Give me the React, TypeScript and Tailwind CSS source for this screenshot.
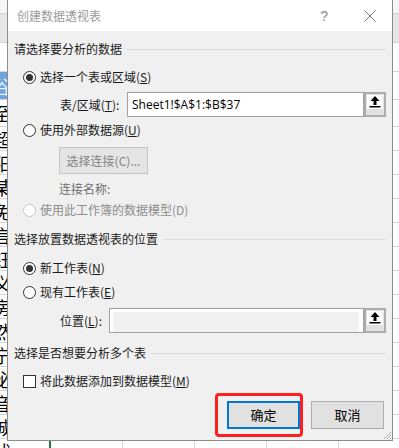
import React from 'react';

// spreadsheet rows behind the dialog
const sheetRows = [
  { h: 'h-[14px]', bg: 'bg-[#f6f6f6]', ch: '' },
  { h: 'h-[29px]', bg: 'bg-[#e6e6e6]', ch: '' },
  { h: 'h-[29px]', bg: 'bg-white', ch: '' },
  { h: 'h-[28px]', bg: 'bg-[#6fa3dc]', ch: '谷', sel: true },
  { h: 'h-[27px]', bg: 'bg-white', ch: '至' },
  { h: 'h-[24px]', bg: 'bg-white', ch: '超' },
  { h: 'h-[24px]', bg: 'bg-white', ch: '阳' },
  { h: 'h-[24px]', bg: 'bg-white', ch: '某' },
  { h: 'h-[24px]', bg: 'bg-white', ch: '免' },
  { h: 'h-[24px]', bg: 'bg-white', ch: '言' },
  { h: 'h-[24px]', bg: 'bg-white', ch: '钰' },
  { h: 'h-[24px]', bg: 'bg-white', ch: '义' },
  { h: 'h-[24px]', bg: 'bg-white', ch: '房' },
  { h: 'h-[24px]', bg: 'bg-white', ch: '然' },
  { h: 'h-[24px]', bg: 'bg-white', ch: '宁' },
  { h: 'h-[24px]', bg: 'bg-white', ch: '泌' },
  { h: 'h-[24px]', bg: 'bg-white', ch: '音' },
  { h: 'h-[24px]', bg: 'bg-white', ch: '城' },
  { h: 'h-[24px]', bg: 'bg-white', ch: '状', last: true },
];

const Sheet = () => (
  <div className="flex flex-col">
    {sheetRows.map((r, i) => (
      <div key={i} className={`flex shrink-0 border-b border-[#d4d4d4] ${r.h}`}>
        <div
          className={`w-[51px] shrink-0 overflow-hidden border-r ${r.last ? 'border-r-2 border-r-[#217346]' : 'border-r-[#d4d4d4]'} ${r.bg} flex items-center`}
        >
          <span className={`-ml-[7px] text-[18px] leading-none ${r.sel ? 'text-[#eaf2fb]' : 'text-black'}`}>{r.ch}</span>
        </div>
        {[0, 1, 2, 3, 4].map((c) => (
          <div key={c} className={`w-[72px] shrink-0 border-r border-[#d4d4d4] ${i < 2 ? r.bg : 'bg-white'}`} />
        ))}
      </div>
    ))}
  </div>
);

const Heading = ({ text }: { text: string }) => (
  <div className="flex items-center h-[18px] pl-[6px] pr-[6px]">
    <span className="whitespace-nowrap">{text}</span>
    <div className="flex-1 h-px bg-[#dcdcdc] ml-[5px]" />
  </div>
);

const Radio = ({ checked, disabled, children }: { checked?: boolean; disabled?: boolean; children: React.ReactNode }) => (
  <div className="flex items-center h-[20px] pl-[15px]">
    <span
      className={`w-[13px] h-[13px] rounded-full border bg-white flex items-center justify-center ${disabled ? 'border-[#c4c4c4]' : 'border-[#333333]'}`}
    >
      {checked && <span className="w-[7px] h-[7px] rounded-full bg-[#333333]" />}
    </span>
    <span className={`ml-[4px] whitespace-nowrap ${disabled ? 'text-[#8d8d8d]' : ''}`}>{children}</span>
  </div>
);

const PickButton = () => (
  <div className="w-[22px] h-[25px] shrink-0 border-2 border-[#adadad] bg-[#e1e1e1] flex justify-center pt-[1px]">
    <div className="w-[16px] h-[14px] bg-white">
      <svg width="16" height="14" viewBox="0 0 16 14">
        <polygon points="8,1 3.5,6 12.5,6" fill="#000" />
        <rect x="6.5" y="5.5" width="3" height="4.5" fill="#000" />
        <rect x="2.5" y="11" width="11" height="1.5" fill="#000" />
      </svg>
    </div>
  </div>
);

export default function App() {
  return (
    <div className="relative w-[399px] h-[448px] overflow-hidden bg-white font-['Microsoft_YaHei','Noto_Sans_CJK_SC',sans-serif]">
      <Sheet />

      {/* dialog window */}
      <div className="absolute left-[7px] top-0 w-[386px] h-[441px] border-x border-b border-[#8c8c8c] bg-[#f0f0f0] flex flex-col text-[12px] text-[#1a1a1a]">
        {/* title bar */}
        <div className="h-[31px] shrink-0 bg-white flex items-center pl-[9px] pr-[16px]">
          <span className="text-[#9a9a9a]">创建数据透视表</span>
          <span className="ml-auto text-[14px] text-[#8a8a8a] font-['Liberation_Sans',sans-serif] leading-none">?</span>
          <svg className="ml-[36px]" width="12" height="12" viewBox="0 0 12 12">
            <path d="M0.5 0.5 L11.5 11.5 M11.5 0.5 L0.5 11.5" stroke="#7a7a7a" strokeWidth="1" />
          </svg>
        </div>

        <div className="flex flex-col pt-[9px]">
          <Heading text="请选择要分析的数据" />

          <div className="mt-[9px]">
            <Radio checked>
              选择一个表或区域(<u>S</u>)
            </Radio>
          </div>

          <div className="mt-[5px] flex items-center pl-[52px] pr-[6px]">
            <span className="w-[67px] shrink-0 whitespace-nowrap">
              表/区域(<u>T</u>):
            </span>
            <div className="flex-1 h-[25px] border border-[#a0a0a0] bg-white flex items-center pl-[4px] font-['Open_Sans',sans-serif] text-[12px] text-black">
              Sheet1!$A$1:$B$37
            </div>
            <PickButton />
          </div>

          <div className="mt-[3px]">
            <Radio>
              使用外部数据源(<u>U</u>)
            </Radio>
          </div>

          <div className="mt-[7px] pl-[51px]">
            <div className="w-[89px] h-[27px] border border-[#c4c4c4] bg-[#e5e5e5] flex items-center justify-center text-[#838383]">
              选择连接(C)...
            </div>
          </div>

          <div className="mt-[6px] h-[18px] flex items-center pl-[51px] text-[#6e6e6e]">连接名称:</div>

          <div className="mt-[2px]">
            <Radio disabled>使用此工作簿的数据模型(D)</Radio>
          </div>

          <div className="mt-[10px]">
            <Heading text="选择放置数据透视表的位置" />
          </div>

          <div className="mt-[10px]">
            <Radio checked>
              新工作表(<u>N</u>)
            </Radio>
          </div>
          <div className="mt-[4px]">
            <Radio>
              现有工作表(<u>E</u>)
            </Radio>
          </div>

          <div className="mt-[6px] flex items-center pl-[52px] pr-[6px]">
            <span className="w-[49px] shrink-0 whitespace-nowrap">
              位置(<u>L</u>):
            </span>
            <div className="flex-1 h-[25px] border border-[#a0a0a0] bg-white pt-[3px] pl-[3px] pr-[4px]">
              <div className="h-full bg-[#f0f0f0]" />
            </div>
            <PickButton />
          </div>

          <div className="mt-[11px]">
            <Heading text="选择是否想要分析多个表" />
          </div>

          <div className="mt-[9px] flex items-center h-[20px] pl-[15px]">
            <span className="w-[13px] h-[13px] border border-[#333333] bg-white" />
            <span className="ml-[4px] whitespace-nowrap">
              将此数据添加到数据模型(<u>M</u>)
            </span>
          </div>

          {/* footer buttons */}
          <div className="mt-[10px] flex justify-end gap-[11px] pr-[8px]">
            <div className="relative">
              <div className="w-[73px] h-[28px] border-2 border-[#0078d7] bg-[#e1e1e1] flex items-center justify-center text-[13px] text-black">
                确定
              </div>
              {/* red annotation box */}
              <div className="absolute -left-[12px] -top-[8px] w-[88px] h-[44px] border-[3px] border-[#ff1f1f] rounded-[4px]" />
            </div>
            <div className="w-[73px] h-[28px] border border-[#adadad] bg-[#e1e1e1] flex items-center justify-center text-[13px] text-black">
              取消
            </div>
          </div>
        </div>

        {/* resize grip */}
        <svg className="absolute right-0 bottom-0" width="10" height="10" viewBox="0 0 10 10">
          <path d="M9 2 L2 9 M9 5 L5 9 M9 8 L8 9" stroke="#a8a8a8" strokeWidth="1" />
        </svg>
      </div>
    </div>
  );
}
